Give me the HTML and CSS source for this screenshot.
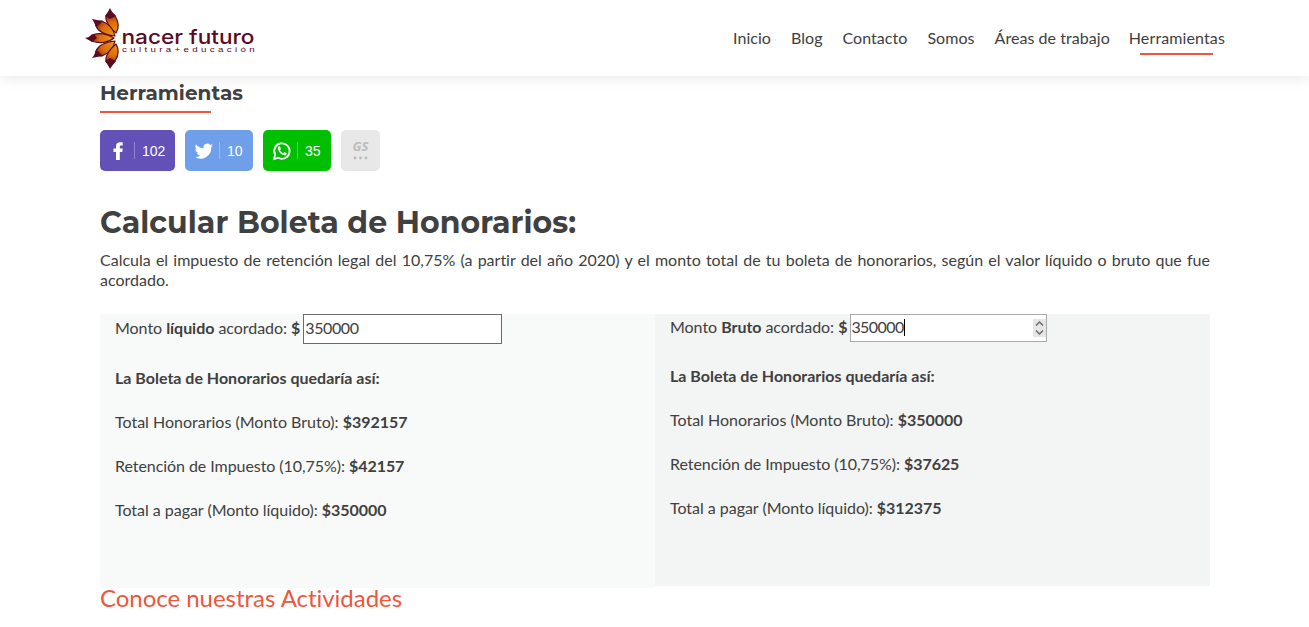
FILE: index.html
```html
<!DOCTYPE html>
<html lang="es">
<head>
<meta charset="utf-8">
<title>Herramientas - Nacer Futuro</title>
<link rel="stylesheet" href="styles.css">
</head>
<body>
<header class="header">
  <svg class="logo" width="172" height="66" viewBox="0 0 172 66" role="img" aria-label="nacer futuro">
    <defs>
      <radialGradient id="petal" gradientUnits="userSpaceOnUse" cx="33" cy="33" r="29">
        <stop offset=".1" stop-color="#f09a10"/>
        <stop offset=".6" stop-color="#dc6c0a"/>
        <stop offset="1" stop-color="#6b1420"/>
      </radialGradient>
    </defs>
    <g fill="url(#petal)" stroke="#5c0a22" stroke-width="1.2" stroke-linejoin="round">
      <path d="M32 27C26 22 21 15 22 10L24 7L26 4L28 7L31 10C35 16 35 22 32 27Z"/>
      <path d="M31 30C21 29 14 25 12 20L11 16L18 15C25 18 30 24 31 30Z"/>
      <path d="M30 32C24 37 15 38 8 35L4 33L8 29C15 26 24 28 30 32Z"/>
      <path d="M31 35C21 36 14 40 12 45L11 49L18 50C25 47 30 41 31 35Z"/>
      <path d="M32 38C26 43 21 50 22 55L24 58L26 61L28 58L31 55C35 49 35 43 32 38Z"/>
    </g>
    <g fill="#5c0a22">
      <path d="M21 10L24 6L26 2L28 6L32 10L26 13ZM12 21L11 18L8 13L13 14L19 15L15 19ZM1 32L5 31L10 28L13 32L8 36L5 34ZM12 44L11 48L8 52L13 51L19 50L15 46ZM21 55L24 59L26 63L28 60L32 55L26 52Z"/>
      <text class="logo-name" x="37.500" y="38" textLength="133" lengthAdjust="spacingAndGlyphs">nacer futuro</text>
      <text class="logo-tag" transform="translate(38 46) scale(1.300 1)" textLength="102" lengthAdjust="spacing">cultura+educación</text>
    </g>
  </svg>
  <nav class="nav">
    <a>Inicio</a><a>Blog</a><a>Contacto</a><a>Somos</a><a>Áreas de trabajo</a><a class="active">Herramientas</a>
  </nav>
</header>
<main class="main">
  <h2 class="page-title">Herramientas</h2>
  <div class="share">
    <a class="btn facebook"><svg width="20" height="20" viewBox="0 0 20 20"><path d="M7 19V11H4.500V7.500H7V5.500C7 2.500 8.500 1.200 11 1.200H13.700V4.500H12C11 4.500 10.800 5 10.800 5.800V7.500H13.700L13.300 11H10.800V19Z"/></svg><span>102</span></a>
    <a class="btn twitter"><svg width="20" height="20" viewBox="-1 -1 26 26"><path d="M23.500 4.900a9.500 9.500 0 0 1-2.700.8 4.800 4.800 0 0 0 2.100-2.700 9.700 9.700 0 0 1-3.100 1.200 4.800 4.800 0 0 0-8.300 4.400A13.800 13.800 0 0 1 1.600 3.500a4.800 4.800 0 0 0 1.500 6.500 4.900 4.900 0 0 1-2.200-.6 4.800 4.800 0 0 0 3.900 4.800 5 5 0 0 1-2.200.1 4.800 4.800 0 0 0 4.500 3.400A9.800 9.800 0 0 1 .2 19.700 13.800 13.800 0 0 0 21.400 7.400a9.700 9.700 0 0 0 2.100-2.500Z"/></svg><span>10</span></a>
    <a class="btn whatsapp"><svg width="20" height="20" viewBox="0 0 20 20"><path d="M2 18L3.200 13.800A7.700 7.700 0 1 1 6.200 16.800Z" fill="none" stroke="#fff" stroke-width="1.800"/><path d="M7 5.300C5.800 6 5.500 7.200 6.100 8.700C7.200 11.500 9.200 13.500 12.100 14.300C13.400 14.500 14.500 13.800 14.700 12.300L12.500 11.100L11.300 12.300C9.800 11.700 8.700 10.600 8 9.200L8.900 8.100L8 5.500Z"/></svg><span>35</span></a>
    <a class="btn more"><b>GS</b><svg width="15" height="4" viewBox="0 0 15 4"><circle cx="2" cy="2" r="1.400"/><circle cx="7.500" cy="2" r="1.400"/><circle cx="13" cy="2" r="1.400"/></svg></a>
  </div>
  <h1 class="heading">Calcular Boleta de Honorarios:</h1>
  <p class="intro">Calcula el impuesto de retención legal del 10,75% (a partir del año 2020) y el monto total de tu boleta de honorarios, según el valor líquido o bruto que fue acordado.</p>
  <div class="columns">
    <section class="col net">
      <div class="field"><span class="label">Monto <b>líquido</b> acordado: <b>$</b></span><span class="input"><span class="value">350000</span></span></div>
      <p><b>La Boleta de Honorarios quedaría así:</b></p>
      <p>Total Honorarios (Monto Bruto): <b>$392157</b></p>
      <p class="tax">Retención de Impuesto (10,75%): <b>$42157</b></p>
      <p class="total">Total a pagar (Monto líquido): <b>$350000</b></p>
    </section>
    <section class="col gross">
      <div class="field"><span class="label">Monto <b>Bruto</b> acordado: <b>$</b></span><span class="input"><span class="value">350000</span><i class="caret"></i><svg class="spinner" width="13" height="18" viewBox="0 0 13 18"><path d="M3 6.500L6.500 3L10 6.500M3 11.500L6.500 15L10 11.500"/></svg></span></div>
      <p><b>La Boleta de Honorarios quedaría así:</b></p>
      <p>Total Honorarios (Monto Bruto): <b>$350000</b></p>
      <p class="tax">Retención de Impuesto (10,75%): <b>$37625</b></p>
      <p class="total">Total a pagar (Monto líquido): <b>$312375</b></p>
    </section>
  </div>
  <h3 class="activities">Conoce nuestras Actividades</h3>
</main>
</body>
</html>
```
FILE: styles.css
```css
* { box-sizing: border-box; }
body { margin: 0; height: 627px; overflow: hidden; background: #fff; color: #404040; font: 16px/20px Lato, sans-serif; font-variant-ligatures: none; }
h1, h2, h3, p { margin: 0; }
.header { height: 76px; padding: 6px 84px 0; display: flex; justify-content: space-between; align-items: flex-start; background: #fff; box-shadow: 0 0 15px rgba(0, 0, 0, .12); }
.logo { display: block; }
.logo-name { font: 500 20px Inter, sans-serif; }
.logo-tag { font: 7.5px "Liberation Sans", sans-serif; }
.nav { display: flex; gap: 20px; padding-top: 22px; letter-spacing: .05px; }
.nav a { height: 27px; white-space: nowrap; }
.nav .active { margin-left: -1px; letter-spacing: .12px; background: linear-gradient(#ec573d, #ec573d) 11px bottom / 73px 2px no-repeat; }
.main { width: 1110px; margin-left: 100px; }
.page-title { width: 111px; height: 37px; padding-top: 5px; border-bottom: 2px solid #ec573d; font: 700 20px/24px Montserrat, sans-serif; letter-spacing: .06px; white-space: nowrap; }
.share { display: flex; gap: 10px; margin-top: 17px; height: 41px; }
.btn { display: flex; align-items: center; width: 68px; padding-left: 9px; border-radius: 5px; color: #fff; font: 14px/20px "Liberation Sans", sans-serif; }
.btn svg { fill: currentColor; }
.btn span { height: 17px; margin-left: 5px; padding-left: 7px; border-left: 1px solid rgba(255, 255, 255, .3); line-height: 18px; }
.facebook { width: 75px; background: #6451b8; }
.twitter { background: #6f9fe8; }
.whatsapp { background: #00bf00; }
.more { width: 39px; padding: 0 0 2px; flex-direction: column; justify-content: center; gap: 2px; background: #e8e8e8; color: #bbb; }
.more b { font: italic 700 13px/15px "Open Sans", sans-serif; }
.heading { margin-top: 32px; height: 40px; font: 700 30px/40px Montserrat, sans-serif; letter-spacing: .05px; white-space: nowrap; }
.intro { margin-top: 7px; text-align: justify; }
.columns { display: flex; align-items: flex-start; margin-top: 24px; }
.col { width: 555px; padding: 0 15px; }
.net { height: 274px; background: #f8faf9; }
.gross { height: 272px; background: #f3f5f4; }
.field { display: flex; gap: 3px; align-items: center; height: 30px; margin-bottom: 24px; line-height: 26px; white-space: nowrap; }
.label { letter-spacing: -.04px; padding-bottom: 2px; }
.col p { margin-bottom: 24px; }
.col .tax { letter-spacing: -.06px; }
.col .total { letter-spacing: -.03px; }
.input { display: flex; align-items: center; width: 199px; height: 30px; padding: 0 1px; border: 1px solid #6b6b6b; background: #fff; }
.gross .field { height: 28px; }
.gross .input { width: 197px; height: 28px; padding: 0; border-color: #aaa; }
.value { letter-spacing: -.4px; padding-bottom: 2px; }
.gross .value { letter-spacing: -.55px; }
.caret { width: 1px; height: 17px; margin-bottom: 2px; background: #000; }
.spinner { margin-left: auto; background: #e6e6e6; fill: none; stroke: #666; stroke-width: 1.4; }
.activities { font: 24px/28px Lato, sans-serif; font-variant-ligatures: none; letter-spacing: -.03px; color: #ec573d; margin-top: -4px; }
```
